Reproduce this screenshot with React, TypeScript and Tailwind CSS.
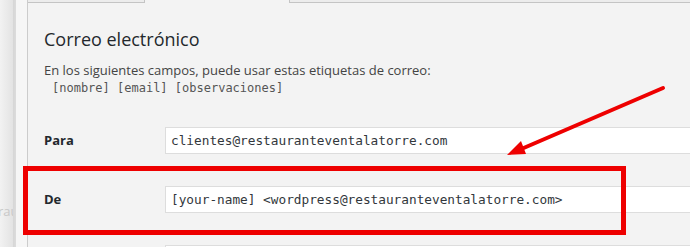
import React from "react";

const sans = { fontFamily: '"Open Sans", "Noto Sans", Arial, sans-serif' };
const mono = { fontFamily: '"DejaVu Sans Mono", "Liberation Mono", monospace' };

function Row({ label, value }: { label: string; value: string }) {
  return (
    <div className="flex items-center py-4">
      <div className="w-[121px] shrink-0 text-[13px] font-bold text-[#23282d]" style={sans}>
        {label}
      </div>
      <div
        className="h-[27px] w-[620px] shrink-0 border border-[#dddddd] bg-white pl-[5px] text-[12.75px] leading-[25px] text-[#32373c] whitespace-nowrap"
        style={mono}
      >
        {value}
      </div>
    </div>
  );
}

export default function App() {
  return (
    <div className="relative flex h-[247px] w-[690px] overflow-hidden bg-[#f3f3f3]">
      <div className="w-[13px] shrink-0 overflow-hidden bg-gradient-to-r from-[#f2f2f2] to-[#e3e3e3]">
        <div className="mt-[202px] -ml-[2px] text-[13px] leading-[18px] text-[#c8c8c8]" style={sans}>
          rau
        </div>
      </div>
      <div className="w-[3px] shrink-0 bg-gradient-to-r from-[#d6d6d6] to-[#dcdcdc]" />
      <div className="w-[11px] shrink-0 bg-[#f6f6f6]" />
      <div className="flex-1 min-w-0 border-l border-[#cccccc] bg-[#f3f3f3]">
        <div className="flex h-[3px]">
          <div className="w-[117px] shrink-0 border-r border-b border-[#c4c4c4] bg-[#ececec]" />
          <div className="w-[144px] shrink-0" />
          <div className="flex-1 border-l border-b border-[#c4c4c4] bg-[#ececec]" />
        </div>
        <div className="pl-4">
          <div className="mt-[24px] h-[24px] text-[18px] leading-[24px] text-[#23282d]" style={sans}>
            Correo electrónico
          </div>
          <div className="mt-[10px] text-[13px] leading-[18px] text-[#444444]" style={sans}>
            En los siguientes campos, puede usar estas etiquetas de correo:
          </div>
          <div className="mt-[1px] pl-2 text-[12px] leading-[16px] text-[#555555]" style={mono}>
            [nombre] [email] [observaciones]
          </div>
          <div className="mt-[15px]">
            <Row label="Para" value="clientes@restauranteventalatorre.com" />
            <Row label="De" value="[your-name] <wordpress@restauranteventalatorre.com>" />
            <Row label="" value="" />
          </div>
        </div>
      </div>

      <div className="absolute left-[23px] top-[166px] h-[69px] w-[603px] border-[5px] border-[#ee0000]" />

      <svg className="absolute left-0 top-0" width="690" height="247" viewBox="0 0 690 247">
        <line x1="663" y1="88" x2="519" y2="150" stroke="#ee0000" strokeWidth="4" strokeLinecap="round" />
        <polygon points="507,155 521,141 526,154" fill="#ee0000" />
      </svg>
    </div>
  );
}
